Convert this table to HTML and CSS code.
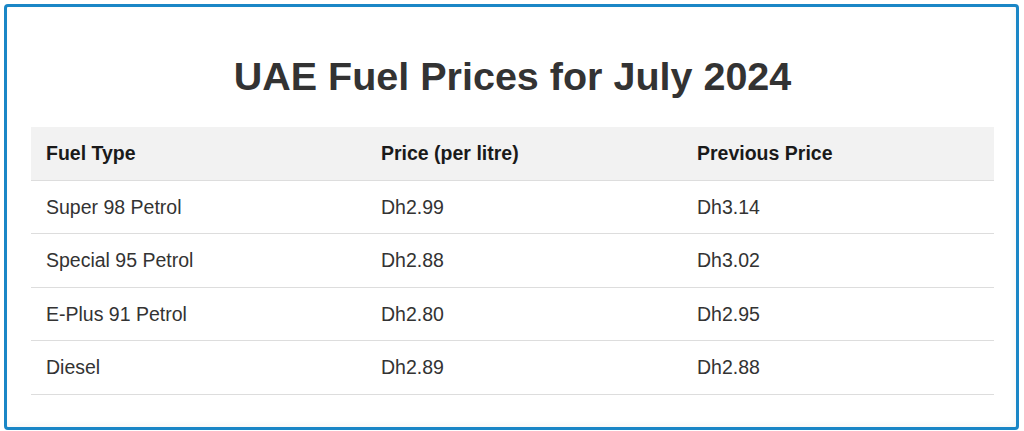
FILE: index.html
```html
<!DOCTYPE html>
<html lang="en">
<head>
<meta charset="utf-8">
<title>UAE Fuel Prices for July 2024</title>
<link rel="stylesheet" href="styles.css">
</head>
<body>
<div class="card">
  <h1 class="title">UAE Fuel Prices for July 2024</h1>
  <table class="prices">
    <thead>
      <tr>
        <th class="col-type">Fuel Type</th>
        <th class="col-price">Price (per litre)</th>
        <th class="col-prev">Previous Price</th>
      </tr>
    </thead>
    <tbody>
      <tr><td>Super 98 Petrol</td><td>Dh2.99</td><td>Dh3.14</td></tr>
      <tr><td>Special 95 Petrol</td><td>Dh2.88</td><td>Dh3.02</td></tr>
      <tr><td>E-Plus 91 Petrol</td><td>Dh2.80</td><td>Dh2.95</td></tr>
      <tr><td>Diesel</td><td>Dh2.89</td><td>Dh2.88</td></tr>
    </tbody>
  </table>
</div>
</body>
</html>
```
FILE: styles.css
```css
html, body {
  margin: 0;
  background: #ffffff;
}
body {
  padding: 4px 5px 3px 4px;
  font-family: "Liberation Sans", Arial, sans-serif;
  color: #333333;
}
.card {
  border: 3px solid #1a86c6;
  border-radius: 4px;
  padding: 24px 22px 32px 24px;
  box-shadow: inset -2px -2px 6px rgba(0,0,0,0.04);
}
.title {
  margin: 22px 0 28px;
  font-size: 39.5px;
  font-weight: bold;
  text-align: center;
  color: #333333;
  line-height: 46px;
}
.prices {
  width: 100%;
  border-collapse: collapse;
  font-size: 19.5px;
  line-height: 20.6px;
}
.prices th,
.prices td {
  text-align: left;
  padding: 16px 15px;
  border-bottom: 1px solid #dddddd;
}
.prices th {
  background: #f2f2f2;
  font-weight: bold;
  color: #1a1a1a;
}
.prices td {
  color: #333333;
}
.col-type { width: 305px; }
.col-price { width: 286px; }
```
